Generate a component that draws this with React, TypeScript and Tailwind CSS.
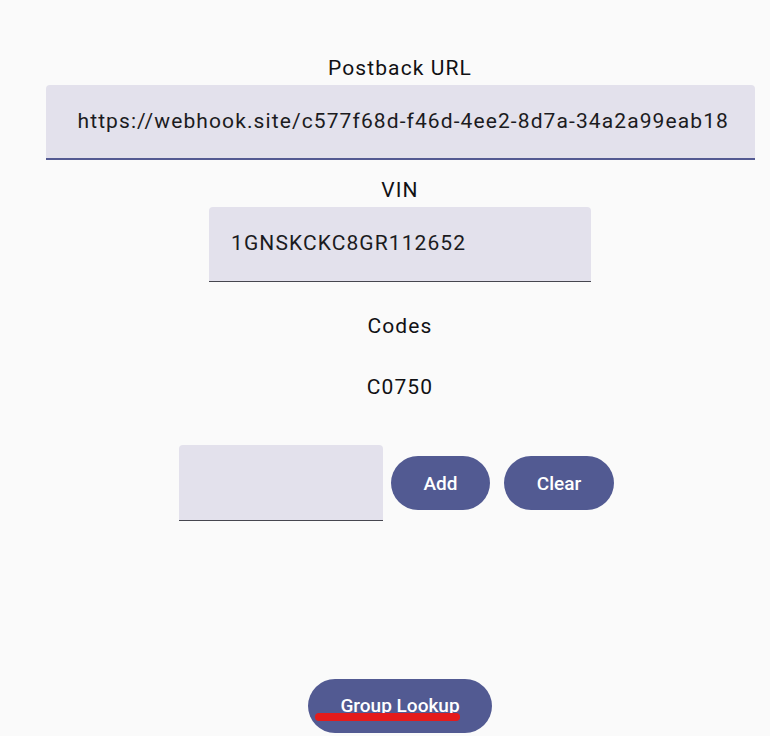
import React from "react";

const FIELD_BG = "bg-[#e3e1ec]";

const Label = ({ children }: { children: React.ReactNode }) => (
  <div className="text-[21px] leading-[28px] tracking-[1.1px] text-[#111114]">{children}</div>
);

export default function App() {
  return (
    <div
      className="w-[770px] h-[736px] overflow-hidden bg-[#fafafa] pl-[30px] flex flex-col items-center"
      style={{ fontFamily: "Roboto, 'Noto Sans', sans-serif" }}
    >
      {/* postback url */}
      <div className="mt-[54px]">
        <Label>Postback URL</Label>
      </div>
      <div
        className={`mt-[3px] w-[709px] h-[75px] ${FIELD_BG} rounded-t-[4px] border-b-2 border-[#545a92] flex items-center pl-[32px] text-[21px] tracking-[1.1px] text-[#1b1b21] whitespace-nowrap`}
      >
        https://webhook.site/c577f68d-f46d-4ee2-8d7a-34a2a99eab18
      </div>

      {/* vin */}
      <div className="mt-[16px]">
        <Label>VIN</Label>
      </div>
      <div
        className={`mt-[3px] w-[382px] h-[75px] ${FIELD_BG} rounded-t-[4px] border-b border-[#46464f] flex items-center pl-[22px] text-[21px] tracking-[1.1px] text-[#1b1b21]`}
      >
        1GNSKCKC8GR112652
      </div>

      {/* codes */}
      <div className="mt-[30px]">
        <Label>Codes</Label>
      </div>
      <div className="mt-[33px]">
        <Label>C0750</Label>
      </div>

      <div className="mt-[44px] mr-[7px] flex items-center">
        <div className={`w-[204px] h-[76px] ${FIELD_BG} rounded-t-[4px] border-b border-[#46464f]`} />
        <button className="ml-[8px] w-[99px] h-[54px] pt-[3px] rounded-full bg-[#525a92] text-white text-[19px] font-medium">
          Add
        </button>
        <button className="ml-[14px] w-[110px] h-[54px] pt-[3px] rounded-full bg-[#525a92] text-white text-[19px] font-medium">
          Clear
        </button>
      </div>

      {/* group lookup */}
      <button className="relative mt-[158px] w-[184px] h-[54px] rounded-full bg-[#525a92] text-white text-[19px] font-medium shrink-0">
        Group Lookup
        <span className="absolute left-[7px] top-[34px] w-[145px] h-[8px] rounded-full bg-[#e41b1b]" />
      </button>
    </div>
  );
}
